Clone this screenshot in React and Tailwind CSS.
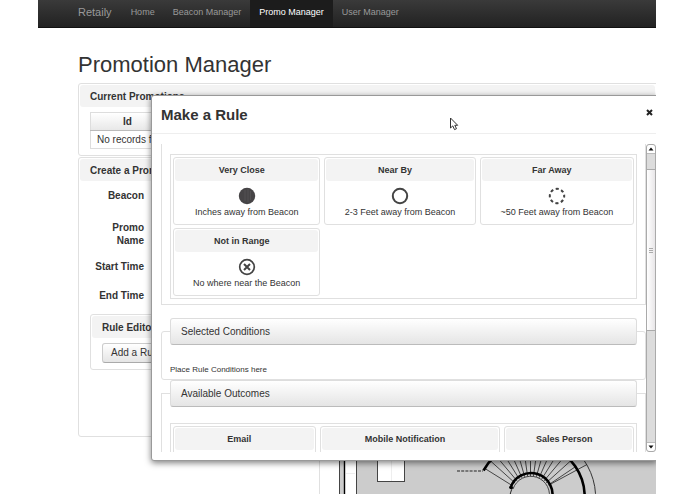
import { useState } from 'react';

const NAV_ITEMS = ['Home', 'Beacon Manager', 'Promo Manager', 'User Manager'];

const CONDITIONS = [
  { title: 'Very Close', text: 'Inches away from Beacon', icon: 'solid' },
  { title: 'Near By', text: '2-3 Feet away from Beacon', icon: 'ring' },
  { title: 'Far Away', text: '~50 Feet away from Beacon', icon: 'dashed' },
  { title: 'Not in Range', text: 'No where near the Beacon', icon: 'cross' },
];

const OUTCOMES = ['Email', 'Mobile Notification', 'Sales Person'];

// spokes of the round staircase, in degrees
const SPOKES = [34, 42, 50, 58, 66, 74, 82, 90, 98, 106, 114, 122, 130, 138, 148];

function RangeIcon({ type }) {
  return (
    <svg width="18" height="18" viewBox="0 0 18 18" fill="none" stroke="#444" strokeWidth="2" className="mx-auto">
      {type === 'solid' && (
        <>
          <circle cx="9" cy="9" r="8.2" fill="#464446" stroke="none" />
          <path d="M7 3v11M10 2v13M12.5 4v9" stroke="#5c5a5c" strokeWidth="0.6" />
        </>
      )}
      {type === 'ring' && <circle cx="9" cy="9" r="7.2" />}
      {type === 'dashed' && <circle cx="9" cy="9" r="7.2" strokeDasharray="3.1 2.555" strokeDashoffset="1.55" />}
      {type === 'cross' && (
        <>
          <circle cx="9" cy="9" r="7.3" strokeWidth="1.7" />
          <path d="M6 6l6 6M12 6l-6 6" />
        </>
      )}
    </svg>
  );
}

function Panel({ title, className = '', children }) {
  return (
    <section className={`rounded-[3px] border border-[#e0e0e0] bg-white p-px ${className}`}>
      <h2 className="rounded-[3px] bg-[#f3f3f3] px-[10px] pt-[5px] pb-1 text-[10px] leading-[13px] font-bold">{title}</h2>
      {children}
    </section>
  );
}

function Card({ title, children }) {
  return (
    <div className="rounded-[3px] border border-[#e0e0e0] p-px pb-[5px] text-center">
      <h4 className="rounded-[3px] bg-[#f3f3f3] pt-[5px] pr-[10px] pb-1 text-[9px] leading-[13px] font-bold">{title}</h4>
      {children}
    </div>
  );
}

function Legend({ children }) {
  return (
    <legend className="w-full rounded-[3px] border border-[#ddd] border-b-[#bbb] bg-linear-to-b from-white to-[#e5e5e5] px-[10px] text-[10px] leading-[25px]">
      {children}
    </legend>
  );
}

function FloorMap() {
  return (
    <svg className="h-[340px] w-full" fill="none" stroke="#222">
      <g transform="translate(-339 -167)">
        <rect x="339" y="160" width="2000" height="400" fill="#ccc" stroke="none" />
        <rect x="345" y="160" width="11" height="400" fill="#fff" stroke="none" />
        <path d="M339.5 160v400M356.5 160v400" stroke="#444" />
        <path d="M344.5 160v400" stroke="#000" strokeWidth="1.4" />
        <path d="M346 472.5h9" stroke="#eee" />
        <rect x="377.5" y="400" width="27" height="80.5" fill="#fff" stroke="#444" />
        <path d="M391.5 400v80" stroke="#eee" />
        <path d="M457 470h26" strokeDasharray="3 1.2" />
        {SPOKES.map((deg) => {
          const a = (deg * Math.PI) / 180;
          return (
            <line
              key={deg}
              x1={530.5 + 21 * Math.cos(a)}
              y1={496 - 21 * Math.sin(a)}
              x2={530.5 + 54 * Math.cos(a)}
              y2={496 - 54 * Math.sin(a)}
              strokeWidth="0.8"
            />
          );
        })}
        <path d="M549 484L587 463.5" strokeWidth="0.8" />
        <path d="M483.5 469.5A54 54 0 0 1 584.5 500" stroke="#000" strokeWidth="2.6" />
        <path d="M574 448A65 65 0 0 1 595.5 500" strokeWidth="0.9" />
        <path d="M510.5 487A21 21 0 0 1 551.5 500" stroke="#000" strokeWidth="2.6" />
        <path d="M509.5 500C509.5 494 511 489 513 486" />
        <path d="M513 488A18.5 18.5 0 0 1 548.5 500" strokeWidth="0.8" />
        <circle cx="511" cy="486.5" r="1.8" fill="#000" stroke="none" />
      </g>
    </svg>
  );
}

function Scrollbar() {
  return (
    <div className="flex w-[10px] shrink-0 flex-col rounded-[3px] border border-[#aaa] bg-[#dcdcdc]">
      <button type="button" aria-label="Scroll up" className="flex h-[9px] items-center justify-center rounded-t-[3px] border-b border-[#bbb] bg-white">
        <svg width="6" height="4"><path d="M3 0.5L5.5 3.5H0.5z" fill="#111" /></svg>
      </button>
      <div className="h-[15px]" />
      <div className="flex h-[162px] flex-col items-center justify-center gap-px border-y border-[#aaa] bg-linear-to-r from-white to-[#e8e6e8]">
        <span className="h-px w-1 bg-[#aaa]" />
        <span className="h-px w-1 bg-[#aaa]" />
        <span className="h-px w-1 bg-[#aaa]" />
      </div>
      <div className="flex-1" />
      <button type="button" aria-label="Scroll down" className="flex h-[9px] items-center justify-center rounded-b-[3px] border-t border-[#bbb] bg-white">
        <svg width="6" height="4"><path d="M3 3.5L5.5 0.5H0.5z" fill="#111" /></svg>
      </button>
    </div>
  );
}

function RuleDialog({ onClose }) {
  return (
    <div
      role="dialog"
      aria-labelledby="rule-title"
      className="absolute top-[95px] right-[-1px] left-[113px] rounded-l-[3px] border border-[#999] bg-white shadow-[0_2px_6px_rgba(0,0,0,0.5)]"
    >
      <div className="flex items-start justify-between border-b border-[#eee] pt-[9px] pr-[3px] pb-2 pl-[9px]">
        <h3 id="rule-title" className="text-[15px] leading-5 font-bold">Make a Rule</h3>
        <button type="button" aria-label="Close" onClick={onClose} className="mt-1">
          <svg width="7" height="7" viewBox="0 0 7 7"><path d="M1 1l5 5M6 1l-5 5" stroke="#222" strokeWidth="2" /></svg>
        </button>
      </div>

      <div className="flex pt-[10px] pb-2 pl-[9px]">
        <div className="h-[308px] min-w-0 flex-1 overflow-hidden">
          <fieldset aria-label="Available Conditions" className="mb-[13px] border border-t-0 border-[#e0e0e0] px-2 pt-[10px] pb-[5px]">
            <div className="grid grid-cols-[147fr_151fr_154fr] gap-x-1 gap-y-[3px] border border-[#e0e0e0] p-[2px]">
              {CONDITIONS.map((c) => (
                <Card key={c.title} title={c.title}>
                  <div className="mt-[6px]"><RangeIcon type={c.icon} /></div>
                  <p className="mt-px text-[9px] leading-[13px]">{c.text}</p>
                </Card>
              ))}
            </div>
          </fieldset>

          <fieldset className="rounded-[3px] border border-[#e0e0e0] px-2 pb-[3px]">
            <Legend>Selected Conditions</Legend>
            <p className="pt-[19px] text-[8px] leading-3">Place Rule Conditions here</p>
          </fieldset>

          <fieldset className="border border-[#e0e0e0] px-2">
            <Legend>Available Outcomes</Legend>
            <div className="mt-4 grid grid-cols-[143fr_181fr_130fr] gap-1 border border-[#e0e0e0] p-[2px]">
              {OUTCOMES.map((name) => (
                <Card key={name} title={name}>
                  <div className="h-10" />
                </Card>
              ))}
            </div>
          </fieldset>
        </div>
        <Scrollbar />
      </div>

      {/* mouse pointer */}
      <svg className="absolute top-[21px] left-[297px]" width="10" height="14" viewBox="0 0 10 14">
        <path d="M1.5 1v10l2.300-2.100 1.700 3.700 2-0.900-1.700-3.400H8.700z" fill="#fff" stroke="#333" />
      </svg>
    </div>
  );
}

export default function App() {
  const [active, setActive] = useState('Promo Manager');
  const [open, setOpen] = useState(true);

  return (
    <div className="h-screen bg-white pr-[39px] pl-[38px] font-['Liberation_Sans',Arial,sans-serif] text-[#333]">
      <div className="relative h-full overflow-hidden">
        {/* Navbar */}
        <nav className="flex h-7 items-stretch border-b border-[#111] bg-linear-to-b from-[#3a3a3a] to-[#222] px-10 text-[9px] leading-6 text-[#999]">
          <a href="#" className="mr-[10px] text-[11px]">Retaily</a>
          {NAV_ITEMS.map((item) => (
            <a
              key={item}
              href="#"
              onClick={() => setActive(item)}
              className={`px-[9px] ${active === item ? 'bg-[#1c1c1c] text-white' : ''}`}
            >
              {item}
            </a>
          ))}
        </nav>

        <main className="pt-[25px] pl-10">
          <h1 className="mb-[6px] text-[22px] leading-6">Promotion Manager</h1>

          <Panel title="Current Promotions" className="-mr-px rounded-r-none">
            <table className="mx-[10px] my-[5px] w-[500px] border-collapse border border-[#ddd] text-[10px] leading-[13px]">
              <thead>
                <tr className="border-b border-[#bbb] bg-linear-to-b from-white to-[#e8e8e8]">
                  <th className="w-[74px] py-[2px]">Id</th>
                  <th className="border-l border-[#ddd] py-[2px]">Name</th>
                </tr>
              </thead>
              <tbody>
                <tr><td colSpan="2" className="px-[6px] py-[2px]">No records found.</td></tr>
              </tbody>
            </table>
          </Panel>

          <div className="mt-px flex items-start gap-[3px]">
            <Panel title="Create a Promotion" className="w-[238px] shrink-0 pb-[66px]">
              <form className="mx-[10px] mt-2 grid grid-cols-[54px_1fr] gap-x-3 gap-y-[13px] text-[10px] leading-[13px]">
                <label htmlFor="beacon" className="text-right font-bold">Beacon</label>
                <select id="beacon" className="h-[19px] border border-[#ccc]" />
                <label htmlFor="promo" className="text-right font-bold">Promo Name</label>
                <input id="promo" type="text" className="h-4 border border-[#ccc]" />
                <label htmlFor="start" className="text-right font-bold">Start Time</label>
                <input id="start" type="text" className="h-4 border border-[#ccc]" />
                <label htmlFor="end" className="text-right font-bold">End Time</label>
                <input id="end" type="text" className="h-4 border border-[#ccc]" />
              </form>
              <Panel title="Rule Editor" className="mx-[10px] mt-[9px] pb-[6px]">
                <button
                  type="button"
                  onClick={() => setOpen(true)}
                  className="mt-[5px] ml-[10px] block rounded-[3px] border border-[#ccc] border-b-[#aaa] bg-linear-to-b from-white to-[#e5e5e5] px-2 text-[10px] leading-[18px]"
                >
                  Add a Rule
                </button>
              </Panel>
            </Panel>
            <div className="flex-1 border border-r-0 border-[#e0e0e0] pt-[10px] pl-[19px]">
              <FloorMap />
            </div>
          </div>
        </main>

        {open && <RuleDialog onClose={() => setOpen(false)} />}
      </div>
    </div>
  );
}
